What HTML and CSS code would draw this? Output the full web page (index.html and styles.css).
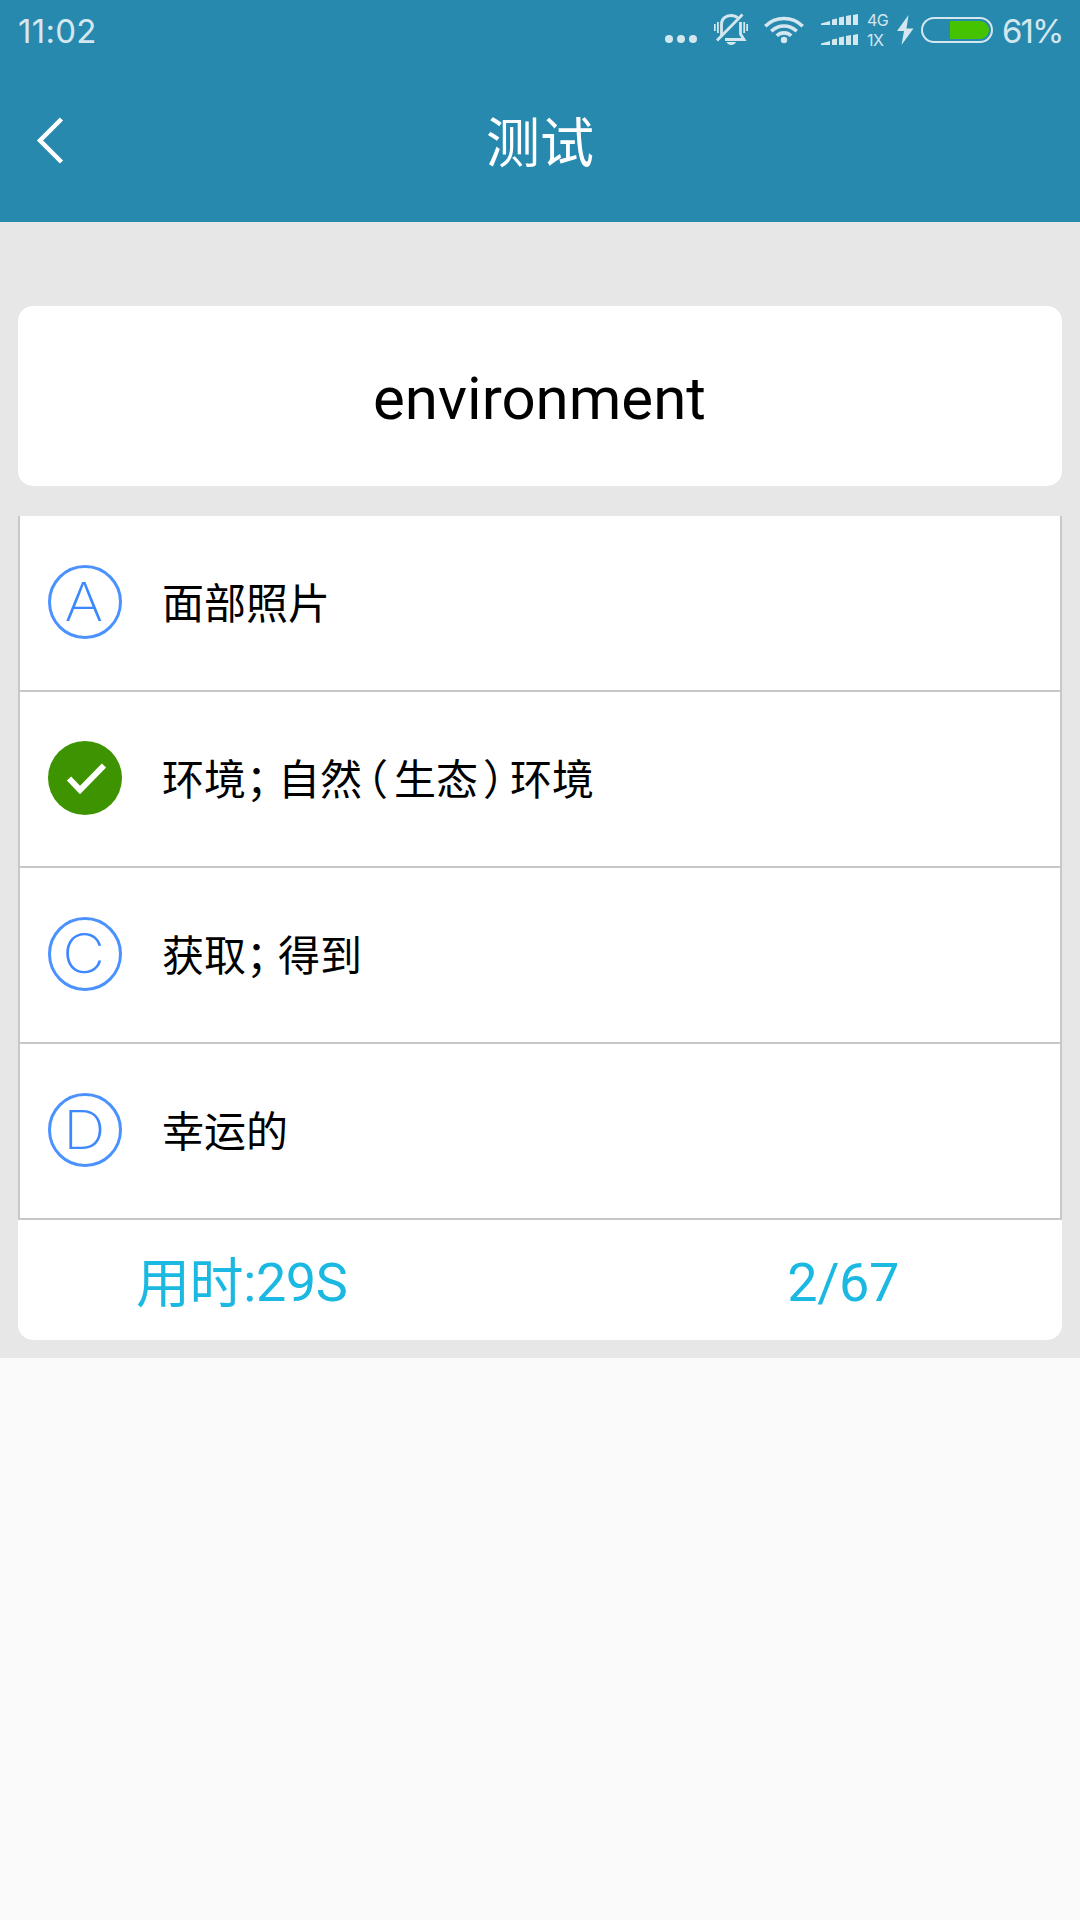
FILE: index.html
```html
<!DOCTYPE html>
<html lang="zh-CN">
<head>
    <meta charset="UTF-8">
    <meta name="viewport" content="width=device-width, initial-scale=1.0">
    <title>测试</title>

    <link rel="stylesheet" href="styles.css">
</head>
<body>

    <header class="header">
        <!-- Status bar -->
        <div class="status-bar">
            <span class="clock">11:02</span>
            <div class="status-icons">
                <svg class="icon-dots" width="32" height="60" viewBox="0 0 32 60">
                    <circle cx="4" cy="39" r="4"/><circle cx="16" cy="39" r="4"/><circle cx="28" cy="39" r="4"/>
                </svg>
                <svg class="icon-bell" width="34" height="60" viewBox="0 0 34 60">
                    <path class="line" d="M7.500 36V24c0-5 4-8.500 9.500-8.500 2.500 0 5 .8 6.500 2.300M26.500 22v12l3.500 5.500H11"/>
                    <path class="line" d="M3 40.500L28.500 14.500"/>
                    <path d="M12.500 42h9.500c-1.500 4-8 4-9.500 0z"/>
                    <path d="M0 24h1.700v7H0zM3 22h1.800v11H3zM29.300 22h1.800v11h-1.800zM32.300 24h1.700v7h-1.700z"/>
                </svg>
                <svg class="icon-wifi" width="40" height="60" viewBox="0 0 40 60">
                    <path class="arc" d="M1.300 26.200a26.500 26.500 0 0 1 37.400 0M7.300 31.200a18 18 0 0 1 25.400 0M12.800 35.700a10.500 10.500 0 0 1 14.400 0"/>
                    <circle cx="20" cy="40" r="3.200"/>
                </svg>
                <svg class="icon-signal" width="37" height="60" viewBox="0 0 37 60">
                    <path d="M0 25v-1.500l9-2.500v4zM11 25v-5.500l5-1v6.500zM18 25v-7.500l5-1v8.500zM25 25v-9l5-1v10zM32 25V15l5-1v11z"/>
                    <path d="M0 45v-1.500l9-2.500v4zM11 45v-5.500l5-1v6.500zM18 45v-7.500l5-1v8.500zM25 45v-9l5-1v10zM32 45V35l5-1v11z"/>
                </svg>
                <div class="network"><span>4G</span><span>1X</span></div>
                <svg class="icon-bolt" width="17" height="60" viewBox="0 0 17 60">
                    <path d="M11.500 15L0 31h7L4.500 45 16.500 28.500H9.500z"/>
                </svg>
                <svg class="icon-battery" width="72" height="60" viewBox="0 0 72 60">
                    <rect class="shell" x="1" y="18" width="70" height="24" rx="12"/>
                    <path class="charge" d="M29 21h30a9 9 0 0 1 0 18H29z"/>
                </svg>
                <span class="percent">61%</span>
            </div>
        </div>

        <!-- Title bar -->
        <div class="title-bar">
            <svg class="back" width="30" height="50" viewBox="0 0 30 50">
                <path d="M25.500 3L4 24.500 25.500 46"/>
            </svg>
            <h1 class="title">测试</h1>
        </div>
    </header>

    <main class="quiz">
        <div class="word">environment</div>

        <ul class="options">
            <li class="option">
                <span class="letter"><span class="glyph">A</span></span>
                <span class="meaning">面部照片</span>
            </li>
            <li class="option">
                <svg class="check" width="74" height="74" viewBox="0 0 74 74">
                    <circle cx="37" cy="37" r="37"/>
                    <path d="M21 37.500L32 49 56 24.500"/>
                </svg>
                <span class="meaning">环境<span class="mark">；</span>自然<span class="mark open">（</span>生态<span class="mark close">）</span>环境</span>
            </li>
            <li class="option">
                <span class="letter"><span class="glyph">C</span></span>
                <span class="meaning">获取<span class="mark">；</span>得到</span>
            </li>
            <li class="option">
                <span class="letter"><span class="glyph">D</span></span>
                <span class="meaning">幸运的</span>
            </li>
        </ul>

        <div class="footer">
            <span class="time"><span class="time-label">用时</span>:29S</span>
            <span class="progress">2/67</span>
        </div>
    </main>

</body>
</html>
```

FILE: styles.css
```css
* {
    box-sizing: border-box;
}

body {
    margin: 0;
    background-color: #fafafa;
    font-family: Roboto, "Noto Sans CJK SC", sans-serif;
    color: #000;
}

/* Header */
.header {
    height: 222px;
    background-color: #2889af;
}

.status-bar {
    display: flex;
    justify-content: space-between;
    height: 60px;
    padding: 0 19px 0 18px;
    color: #d4e7ef;
    fill: #d4e7ef;
    line-height: 62px;
}

.clock,
.percent {
    font-family: Inter, Roboto, sans-serif;
    font-size: 33px;
    font-weight: 400;
}

.clock {
    letter-spacing: 0.3px;
}

.percent {
    width: 58px;
    margin-left: 9px;
    margin-right: 1px;
    letter-spacing: -2px;
    white-space: nowrap;
}

.status-icons {
    display: flex;
}

.icon-bell {
    margin-left: 17px;
}

.icon-bell .line {
    fill: none;
    stroke: #d4e7ef;
    stroke-width: 2.8;
}

.icon-wifi {
    margin-left: 16px;
}

.icon-wifi .arc {
    fill: none;
    stroke: #d4e7ef;
    stroke-width: 3.6;
}

.icon-signal {
    margin-left: 17px;
}

.network {
    display: flex;
    flex-direction: column;
    width: 22px;
    margin-left: 9px;
    padding-top: 10px;
    font-family: Inter, Roboto, sans-serif;
    font-size: 16px;
    line-height: 20px;
    letter-spacing: -0.5px;
}

.icon-bolt {
    margin-left: 8px;
}

.icon-battery {
    margin-left: 7px;
}

.icon-battery .shell {
    fill: none;
    stroke: #d4e7ef;
    stroke-width: 2;
}

.icon-battery .charge {
    fill: #46c300;
}

.title-bar {
    display: grid;
    grid-template-columns: 100px 1fr 100px;
    align-items: center;
    height: 162px;
}

.back {
    margin: 0 0 1px 36px;
    fill: none;
    stroke: #fff;
    stroke-width: 4.5;
}

.title {
    margin: 0;
    padding-top: 7px;
    color: #fff;
    font-size: 54px;
    font-weight: 400;
    line-height: 80px;
    text-align: center;
}

/* Quiz panel */
.quiz {
    height: 1136px;
    padding: 84px 18px 18px;
    background-color: #e7e7e7;
}

.word {
    height: 180px;
    padding-right: 1px;
    border-radius: 15px;
    background-color: #fff;
    font-size: 60px;
    line-height: 186px;
    text-align: center;
}

.options {
    margin: 30px 0 0;
    padding: 0;
    border: solid #c8c8ca;
    border-width: 0 2px;
    background-color: #fff;
    list-style: none;
}

.option {
    display: flex;
    align-items: center;
    height: 176px;
    padding: 0 28px 2px;
    border-bottom: 2px solid #c8c8c8;
}

.letter {
    width: 74px;
    height: 74px;
    border: 3px solid #4c92ff;
    border-radius: 50%;
    color: #3d88ff;
    font-family: Inter, Roboto, sans-serif;
    font-size: 54px;
    font-weight: 200;
    line-height: 67px;
    text-align: center;
}

.glyph {
    display: inline-block;
    transform: translateX(-1px) scaleX(1.09);
}

.check circle {
    fill: #3d9400;
}

.check path {
    fill: none;
    stroke: #fff;
    stroke-width: 6;
}

.meaning {
    margin: -2px 0 0 40px;
    font-family: "Noto Sans CJK SC", sans-serif;
    font-size: 42px;
    line-height: 60px;
    white-space: nowrap;
}

/* half-width punctuation with its own side gaps */
.mark {
    display: inline-block;
    margin: 0 11px 0 0;
    font-feature-settings: "halt";
}

.mark.open {
    margin: 0 6px 0 5px;
}

.mark.close {
    margin: 0 6px 0 5px;
}

.footer {
    display: flex;
    justify-content: space-between;
    height: 120px;
    padding: 0 163px 0 118px;
    border-radius: 0 0 15px 15px;
    background-color: #fff;
    color: #1bb9e2;
    font-size: 54px;
    line-height: 126px;
    letter-spacing: -0.4px;
}

.time-label {
    display: inline-block;
    transform: translateY(2px);
}
```
